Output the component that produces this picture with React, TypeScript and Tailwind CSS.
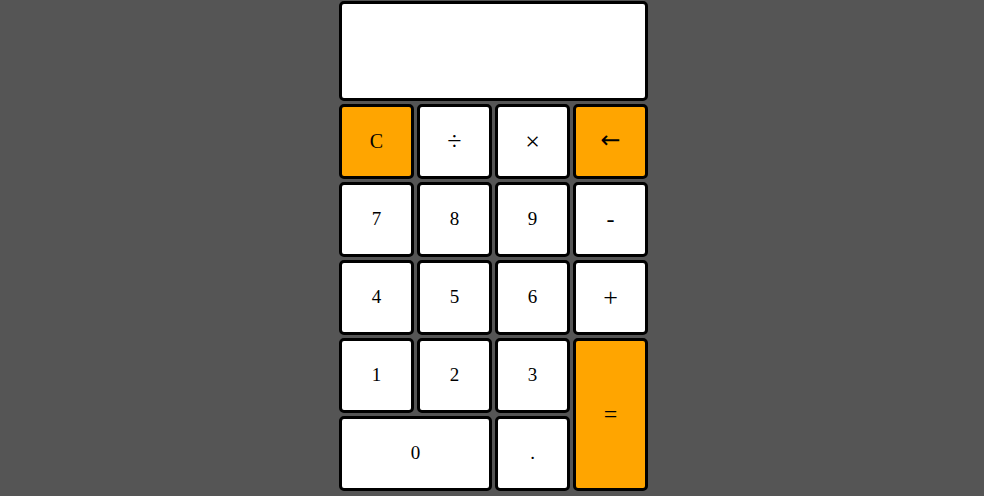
import React from "react";

type Key = { label: string; bg?: string; span?: string; size?: string };

const orange = "bg-[#ffa500]";

const keys: Key[] = [
  { label: "C", bg: orange, size: "text-[20px] pb-[1px]" },
  { label: "÷", size: "text-[26px] pb-[1px]" },
  { label: "×", size: "text-[26px] pb-[1px]" },
  { label: "←", bg: orange, size: "text-[24px] font-['DejaVu_Sans',sans-serif] pb-[3px]" },
  { label: "7" },
  { label: "8" },
  { label: "9" },
  { label: "-", size: "text-[24px] pb-[1px]" },
  { label: "4" },
  { label: "5" },
  { label: "6" },
  { label: "+", size: "text-[26px] pb-[1px]" },
  { label: "1" },
  { label: "2" },
  { label: "3" },
  { label: "=", bg: orange, span: "row-span-2", size: "text-[24px] pb-[1px]" },
  { label: "0", span: "col-span-2" },
  { label: "." },
];

export default function App() {
  return (
    <div
      className="min-h-[496px] w-full bg-[#555555] flex justify-center pt-[1px]"
      style={{ fontFamily: '"Liberation Serif", "Times New Roman", serif' }}
    >
      <div className="w-[309px] ml-[3px]">
        <div className="h-[100px] bg-white border-[3px] border-black rounded-[5px] mb-[3px]" />
        <div className="grid grid-cols-[repeat(4,75px)] auto-rows-[75px] gap-[3px]">
          {keys.map((k) => (
            <button
              key={k.label}
              className={`border-[3px] border-black rounded-[5px] flex items-center justify-center text-black ${
                k.size ?? "text-[19px]"
              } ${k.bg ?? "bg-white"} ${k.span ?? ""}`}
            >
              {k.label}
            </button>
          ))}
        </div>
      </div>
    </div>
  );
}
